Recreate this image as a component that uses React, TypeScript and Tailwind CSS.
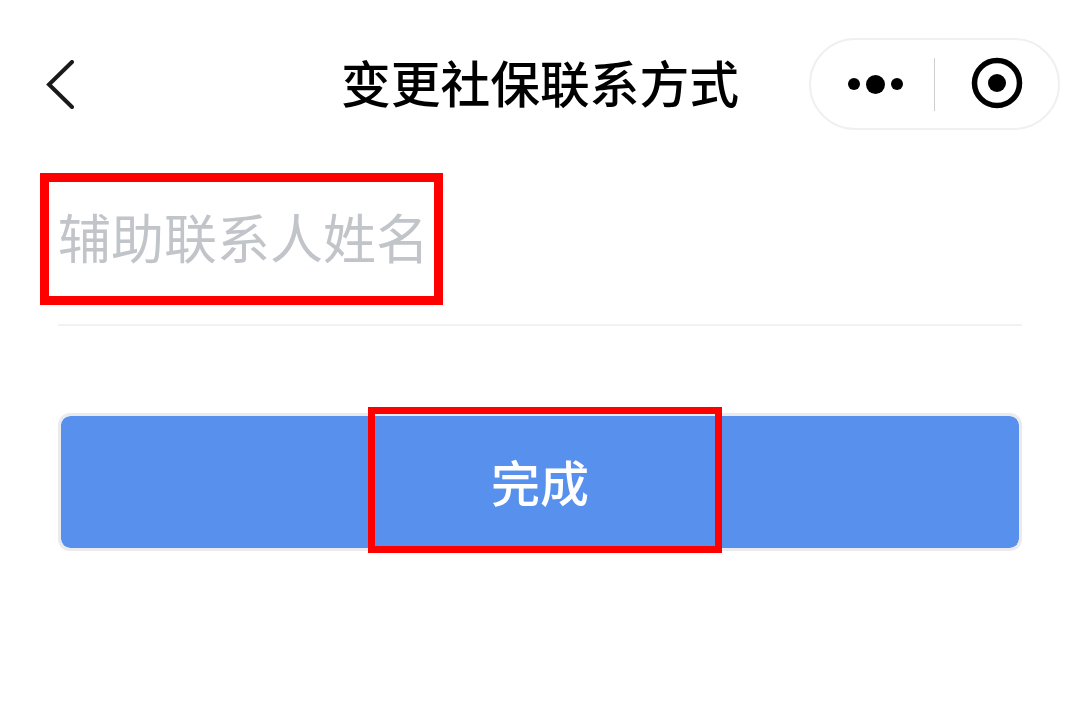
function CapsuleMenu() {
  return (
    <div className="flex items-center w-[251px] h-[92px] rounded-full border-2 border-[#f0f0f0] bg-white">
      <div className="flex items-center justify-center w-[123px] h-full pl-[6px]">
        <div className="flex items-center gap-[6px]">
          <span className="w-[12px] h-[12px] rounded-full bg-black" />
          <span className="w-[19px] h-[19px] rounded-full bg-black" />
          <span className="w-[12px] h-[12px] rounded-full bg-black" />
        </div>
      </div>
      <div className="w-px h-[53px] bg-[#cfcfcf]" />
      <div className="flex items-center justify-center flex-1 h-full pb-[2px]">
        <svg width="52" height="52" viewBox="0 0 52 52">
          <circle cx="26" cy="26" r="22.5" fill="none" stroke="#000" strokeWidth="5.5" />
          <circle cx="26" cy="26" r="9" fill="#000" />
        </svg>
      </div>
    </div>
  )
}

export default function App() {
  return (
    <div className="min-h-[719px] bg-white pt-[38px] font-['Liberation_Sans','Noto_Sans_CJK_SC',sans-serif]">
      <header className="grid grid-cols-[1fr_auto_1fr] items-center h-[92px]">
        <div className="pl-[46px]">
          <svg width="28" height="49" viewBox="0 0 28 49" fill="none">
            <path d="M26 2 L3 24.5 L26 47" stroke="#1a1a1a" strokeWidth="4" strokeLinecap="round" strokeLinejoin="miter" />
          </svg>
        </div>
        <h1 className="pt-[6px] text-[49.75px] leading-none font-medium text-black whitespace-nowrap">
          变更社保联系方式
        </h1>
        <div className="flex justify-end pr-[20px]">
          <CapsuleMenu />
        </div>
      </header>

      <main className="mx-[58px]">
        <div className="relative flex items-center h-[196px] pt-[27px] border-b-2 border-[#f2f2f2]">
          <span className="text-[53px] leading-none text-[#c1c4c9] whitespace-nowrap">辅助联系人姓名</span>
          <div className="absolute left-[-18px] top-[43px] w-[403px] h-[132px] border-[9px] border-[#ff0000]" />
        </div>

        <div className="relative mt-[87px]">
          <button className="flex items-center justify-center w-full h-[138px] pt-[7px] rounded-[12px] border-[3px] border-[#ebebed] bg-[#5890ee] bg-clip-padding text-[49px] leading-none font-medium text-white">
            完成
          </button>
          <div className="absolute left-[310px] top-[-6px] w-[354px] h-[146px] border-[7px] border-[#ff0000]" />
        </div>
      </main>
    </div>
  )
}
